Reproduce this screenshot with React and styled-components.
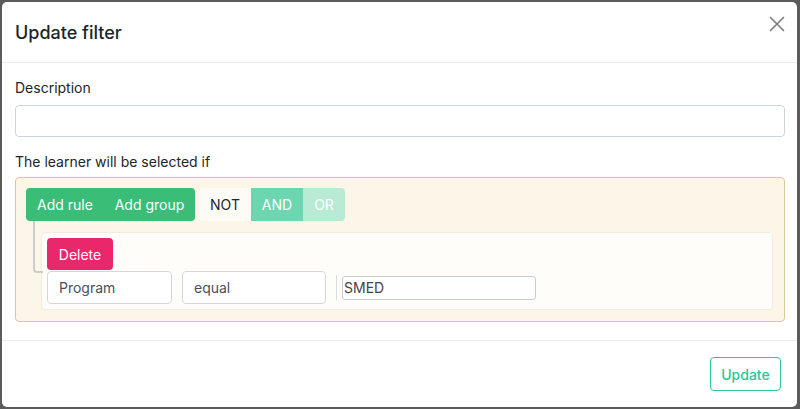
import React, { useState } from 'react'
import styled, { createGlobalStyle } from 'styled-components'

const GlobalStyle = createGlobalStyle`
    html, body {
        margin: 0;
        padding: 0;
        height: 100%;
        background: #5b5b5b;
        font-family: Inter, "Noto Sans", "Liberation Sans", sans-serif;
        color: #212529;
    }
    #root {
        height: 100%;
    }
    * {
        box-sizing: border-box;
    }
`

const Backdrop = styled.div`
    height: 100%;
    padding: 2px 3px 2px 2px;
    display: flex;
`

const Modal = styled.div`
    flex: 1;
    display: flex;
    flex-direction: column;
    background: #fff;
    border-radius: 5px;
    overflow: hidden;
`

const Header = styled.div`
    height: 61px;
    display: flex;
    align-items: center;
    justify-content: space-between;
    padding: 0 12px 0 13px;
    border-bottom: 1px solid #e9ecef;
`

const Title = styled.h5`
    margin: 0;
    font-size: 18px;
    font-weight: 500;
    color: #212529;
`

const CloseButton = styled.button`
    border: none;
    background: none;
    padding: 0;
    margin-top: -16px;
    width: 16px;
    height: 16px;
    display: flex;
    cursor: pointer;
`

const Body = styled.div`
    padding: 15px 12px 18px 13px;
    display: flex;
    flex-direction: column;
`

const Label = styled.label`
    font-size: 14px;
    line-height: 20px;
    margin-top: ${props => props.$first ? '0' : '15px'};
    margin-bottom: ${props => props.$first ? '7px' : '5px'};
`

const TextInput = styled.input`
    height: 32px;
    width: 100%;
    border: 1px solid #ced4da;
    border-radius: 4px;
    font-size: 14px;
    padding: 0 12px;
    outline: none;
`

const QueryBox = styled.div`
    background: #fcf6e9;
    border: 1px solid #dcc896;
    border-radius: 4px;
    padding: 10px 11px 11px 10px;
`

const Toolbar = styled.div`
    display: flex;
    gap: 4px;
`

const BtnGroup = styled.div`
    display: flex;
    border-radius: 4px;
    overflow: hidden;
`

const GroupBtn = styled.button`
    width: ${props => props.$w}px;
    height: 33px;
    border: none;
    padding: 0;
    font-family: inherit;
    font-size: 14px;
    color: ${props => props.$dark ? '#212529' : '#fff'};
    background: ${props => props.$bg};
    cursor: pointer;
`

const RuleTree = styled.div`
    position: relative;
    margin-top: 11px;
    margin-left: 15px;
    &::before {
        content: '';
        position: absolute;
        left: -8px;
        top: -11px;
        width: 8px;
        height: 50px;
        border-left: 2px solid #ccc;
        border-bottom: 2px solid #ccc;
        border-bottom-left-radius: 4px;
    }
`

const Rule = styled.div`
    background: #fffdfa;
    border: 1px solid #f1ece2;
    border-radius: 4px;
    padding: 5px;
    display: flex;
    flex-direction: column;
    gap: 1px;
`

const DeleteBtn = styled.button`
    align-self: flex-start;
    height: 32px;
    width: 66px;
    padding: 0;
    border: none;
    border-radius: 4px;
    background: #e8286b;
    color: #fff;
    font-family: inherit;
    font-size: 14px;
    cursor: pointer;
`

const RuleRow = styled.div`
    display: flex;
    align-items: center;
`

const Field = styled.div`
    width: ${props => props.$w}px;
    height: 33px;
    border: 1px solid #d3d7dc;
    border-radius: 4px;
    background: #fff;
    display: flex;
    align-items: center;
    padding-left: 11px;
    font-size: 14px;
    color: #495057;
    margin-right: 10px;
`

const Separator = styled.span`
    width: 1px;
    height: 25px;
    background: #dcdcdc;
    margin-right: 5px;
`

const ValueInput = styled.input`
    width: 194px;
    height: 24px;
    border: 1px solid #c9cdd2;
    border-radius: 3px;
    padding: 0 1px;
    font-family: inherit;
    font-size: 14px;
    color: #444;
    outline: none;
`

const Footer = styled.div`
    margin-top: auto;
    border-top: 1px solid #e9ecef;
    height: 67px;
    display: flex;
    justify-content: flex-end;
    align-items: flex-start;
    padding: 16px 16px 0;
`

const UpdateBtn = styled.button`
    height: 34px;
    width: 71px;
    padding: 0;
    border: 1px solid #2cc795;
    border-radius: 4px;
    background: #fff;
    color: #2cc795;
    font-family: inherit;
    font-size: 14px;
    font-weight: 500;
    cursor: pointer;
`

export default function App() {
    const [description, setDescription] = useState('')
    const [value, setValue] = useState('SMED')

    return (
        <>
            <GlobalStyle />
            <Backdrop>
                <Modal>
                    <Header>
                        <Title>Update filter</Title>
                        <CloseButton aria-label="Close">
                            <svg width="16" height="16" viewBox="0 0 16 16">
                                <path d="M1 1L15 15M15 1L1 15" stroke="#7a7a7a" strokeWidth="1.6" fill="none" />
                            </svg>
                        </CloseButton>
                    </Header>
                    <Body>
                        <Label $first>Description</Label>
                        <TextInput value={description} onChange={e => setDescription(e.target.value)} />
                        <Label>The learner will be selected if</Label>
                        <QueryBox>
                            <Toolbar>
                                <BtnGroup>
                                    <GroupBtn $bg="#39bd77" $w={78}>Add rule</GroupBtn>
                                    <GroupBtn $bg="#39bd77" $w={91}>Add group</GroupBtn>
                                </BtnGroup>
                                <BtnGroup>
                                    <GroupBtn $bg="#fdfbf6" $w={52} $dark>NOT</GroupBtn>
                                    <GroupBtn $bg="#6bd6b0" $w={52}>AND</GroupBtn>
                                    <GroupBtn $bg="#b8ead4" $w={42}>OR</GroupBtn>
                                </BtnGroup>
                            </Toolbar>
                            <RuleTree>
                                <Rule>
                                    <DeleteBtn>Delete</DeleteBtn>
                                    <RuleRow>
                                        <Field $w={125}>Program</Field>
                                        <Field $w={144}>equal</Field>
                                        <Separator />
                                        <ValueInput value={value} onChange={e => setValue(e.target.value)} />
                                    </RuleRow>
                                </Rule>
                            </RuleTree>
                        </QueryBox>
                    </Body>
                    <Footer>
                        <UpdateBtn>Update</UpdateBtn>
                    </Footer>
                </Modal>
            </Backdrop>
        </>
    )
}
